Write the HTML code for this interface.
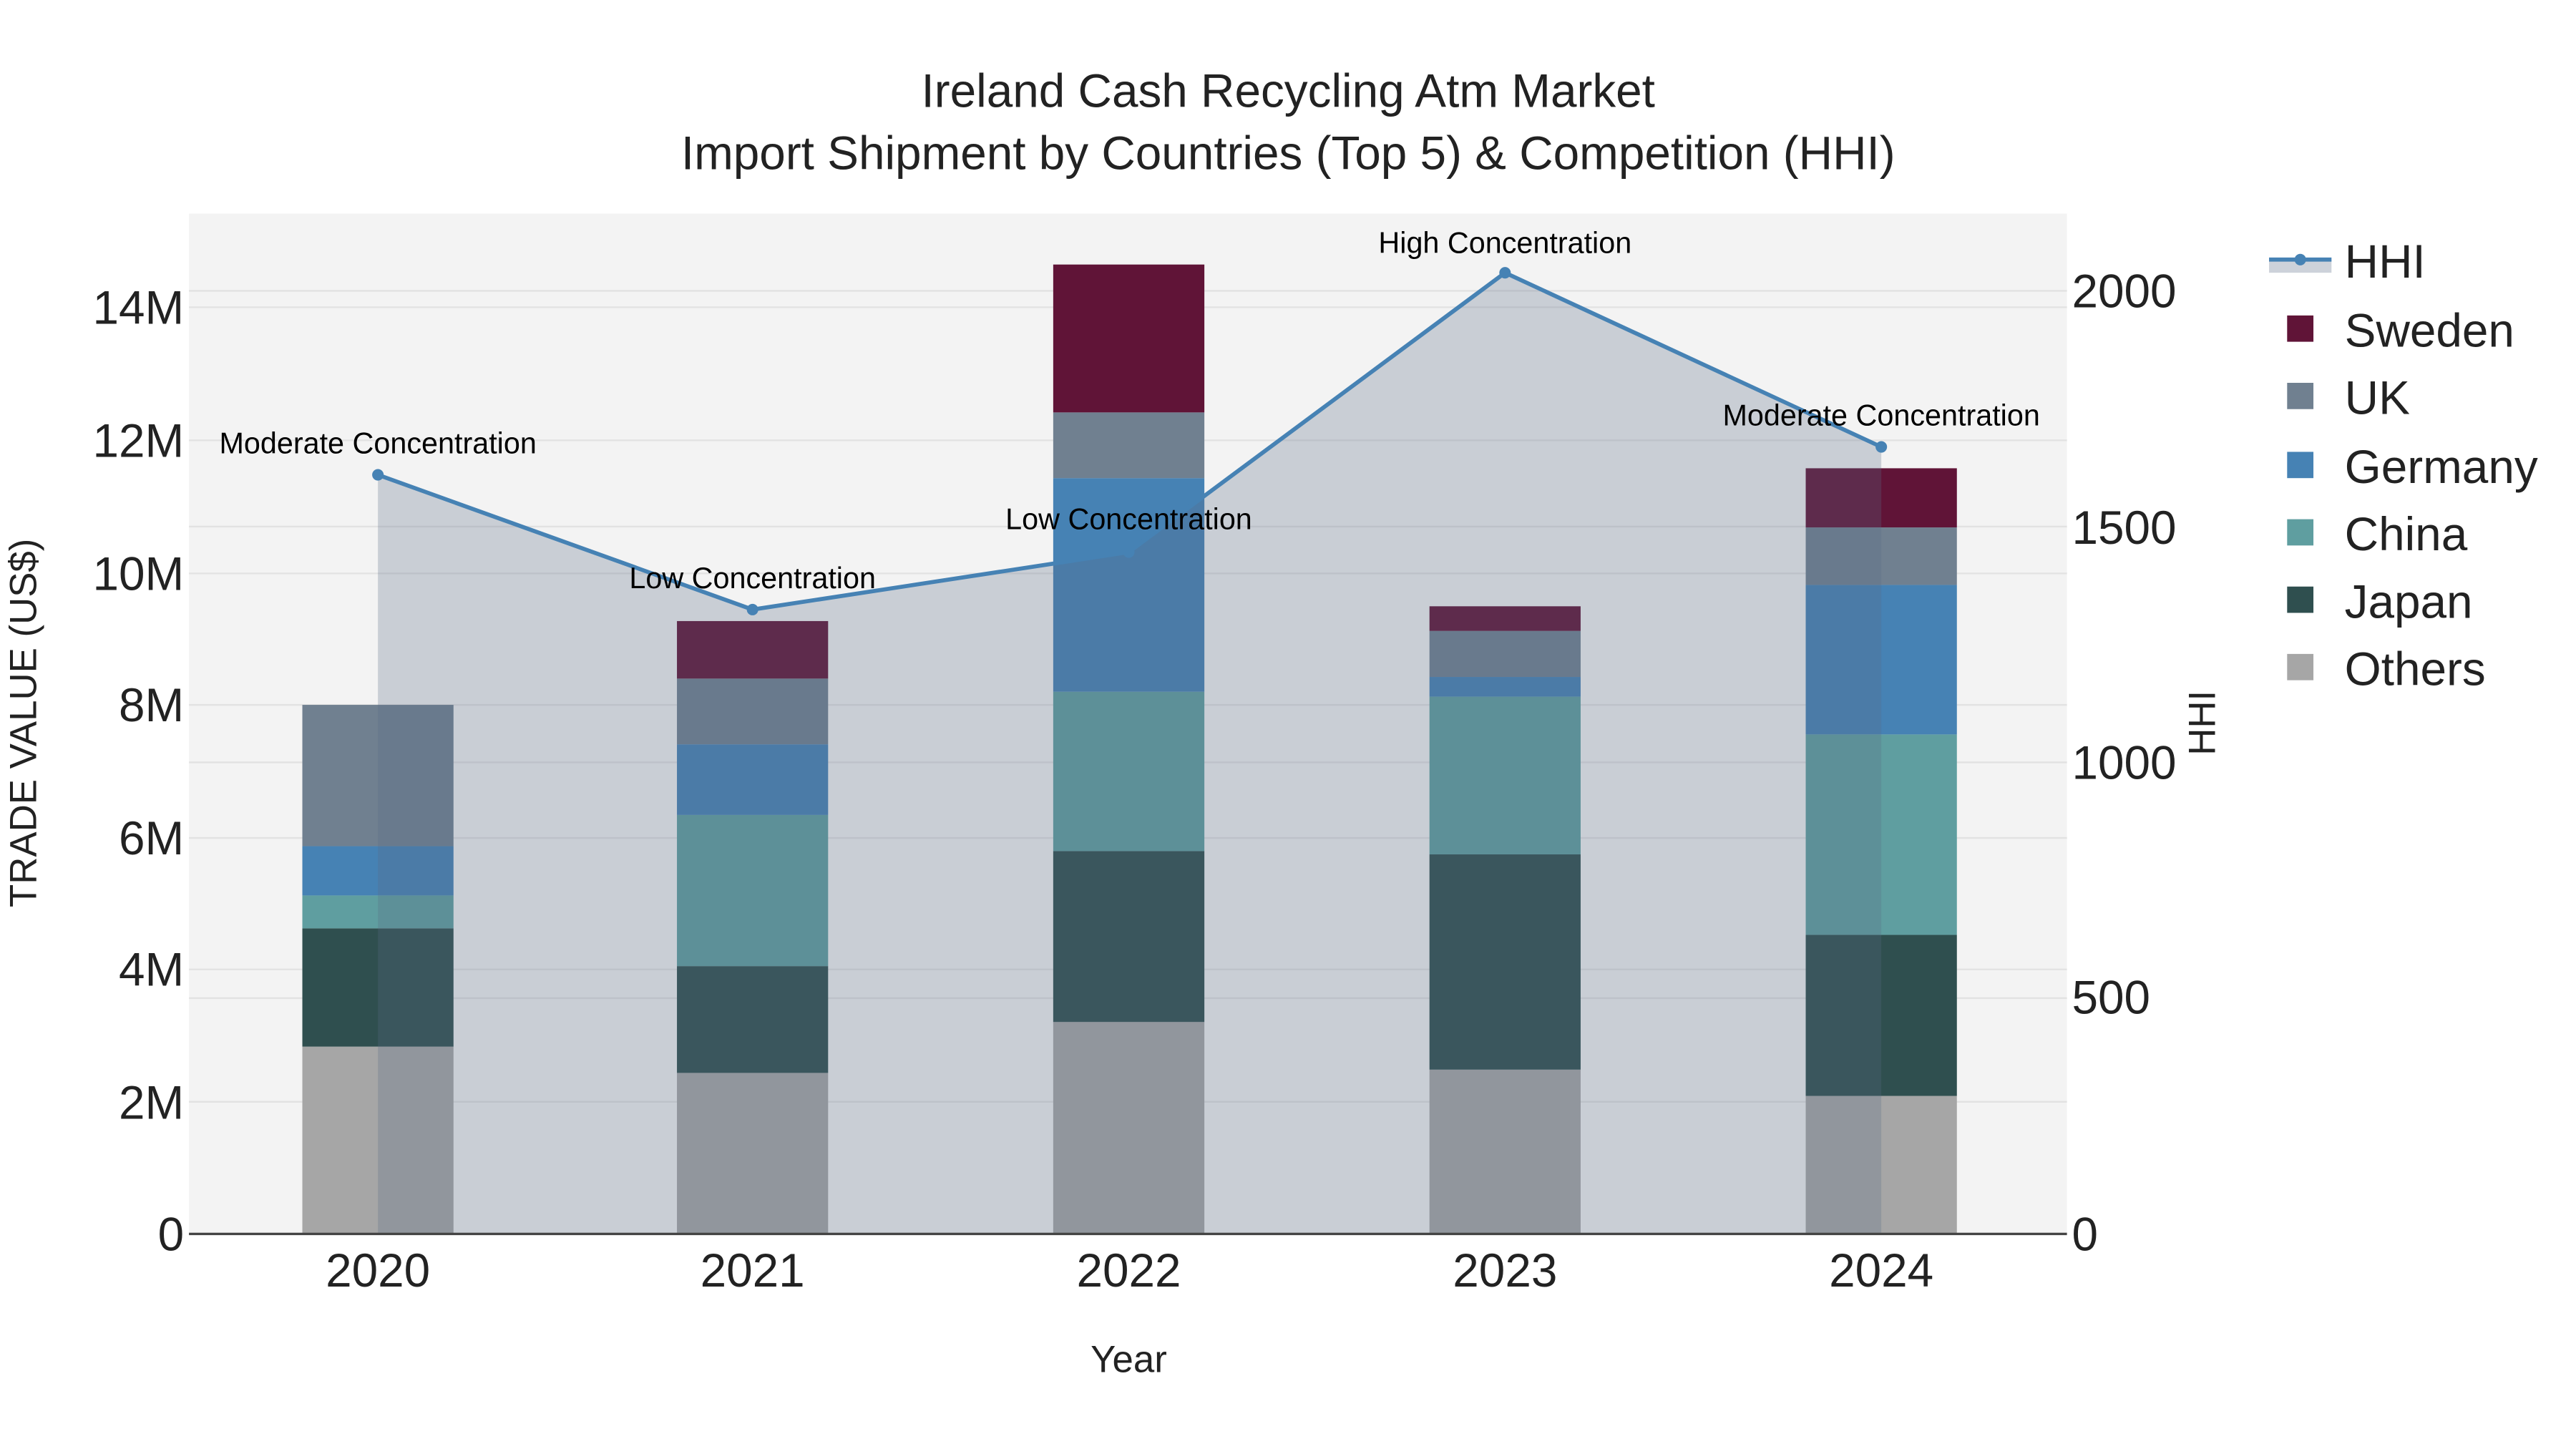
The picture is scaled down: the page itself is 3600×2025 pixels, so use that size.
<!DOCTYPE html>
<html><head><meta charset="utf-8"><style>html,body{margin:0;padding:0;background:#fff}svg{display:block}</style></head><body>
<svg width="3600" height="2025" viewBox="0 0 1567.8 881.9" xmlns="http://www.w3.org/2000/svg" font-family="Liberation Sans, sans-serif">
<rect x="0" y="0" width="1570" height="885" fill="#fff"/>
<rect x="115" y="130" width="1143" height="621" fill="#f3f3f3"/>
<g stroke="#e2e2e2" stroke-width="1">
<line x1="115" x2="1258" y1="670.6" y2="670.6"/><line x1="115" x2="1258" y1="590" y2="590"/><line x1="115" x2="1258" y1="510" y2="510"/><line x1="115" x2="1258" y1="429" y2="429"/><line x1="115" x2="1258" y1="349" y2="349"/><line x1="115" x2="1258" y1="268" y2="268"/><line x1="115" x2="1258" y1="187" y2="187"/>
<line x1="115" x2="1258" y1="607.5" y2="607.5"/><line x1="115" x2="1258" y1="464" y2="464"/><line x1="115" x2="1258" y1="320.5" y2="320.5"/><line x1="115" x2="1258" y1="177" y2="177"/>
</g>
<g>
<rect x="184" y="637" width="92" height="114" fill="#a6a6a6"/>
<rect x="184" y="565" width="92" height="72" fill="#2f4f4f"/>
<rect x="184" y="545" width="92" height="20" fill="#5f9ea0"/>
<rect x="184" y="515" width="92" height="30" fill="#4682b4"/>
<rect x="184" y="429" width="92" height="86" fill="#708090"/>
<rect x="412" y="653" width="92" height="98" fill="#a6a6a6"/>
<rect x="412" y="588" width="92" height="65" fill="#2f4f4f"/>
<rect x="412" y="496" width="92" height="92" fill="#5f9ea0"/>
<rect x="412" y="453" width="92" height="43" fill="#4682b4"/>
<rect x="412" y="413" width="92" height="40" fill="#708090"/>
<rect x="412" y="378" width="92" height="35" fill="#601437"/>
<rect x="641" y="622" width="92" height="129" fill="#a6a6a6"/>
<rect x="641" y="518" width="92" height="104" fill="#2f4f4f"/>
<rect x="641" y="421" width="92" height="97" fill="#5f9ea0"/>
<rect x="641" y="291" width="92" height="130" fill="#4682b4"/>
<rect x="641" y="251" width="92" height="40" fill="#708090"/>
<rect x="641" y="161" width="92" height="90" fill="#601437"/>
<rect x="870" y="651" width="92" height="100" fill="#a6a6a6"/>
<rect x="870" y="520" width="92" height="131" fill="#2f4f4f"/>
<rect x="870" y="424" width="92" height="96" fill="#5f9ea0"/>
<rect x="870" y="412" width="92" height="12" fill="#4682b4"/>
<rect x="870" y="384" width="92" height="28" fill="#708090"/>
<rect x="870" y="369" width="92" height="15" fill="#601437"/>
<rect x="1099" y="667" width="92" height="84" fill="#a6a6a6"/>
<rect x="1099" y="569" width="92" height="98" fill="#2f4f4f"/>
<rect x="1099" y="447" width="92" height="122" fill="#5f9ea0"/>
<rect x="1099" y="356" width="92" height="91" fill="#4682b4"/>
<rect x="1099" y="321" width="92" height="35" fill="#708090"/>
<rect x="1099" y="285" width="92" height="36" fill="#601437"/>
</g>
<polygon points="230,751 230,289 458,371 687,336 916,166 1145,272 1145,751" fill="#5a6b85" fill-opacity="0.27"/>
<polyline points="230,289 458,371 687,336 916,166 1145,272" fill="none" stroke="#4682b4" stroke-width="2.5"/>
<g fill="#4682b4"><circle cx="230" cy="289" r="3.5"/><circle cx="458" cy="371" r="3.5"/><circle cx="687" cy="336" r="3.5"/><circle cx="916" cy="166" r="3.5"/><circle cx="1145" cy="272" r="3.5"/></g>
<line x1="115" x2="1258" y1="751" y2="751" stroke="#444" stroke-width="1.5"/>
<g font-size="18" fill="#000" text-anchor="middle">
<text x="230" y="276">Moderate Concentration</text>
<text x="458" y="358">Low Concentration</text>
<text x="687" y="322">Low Concentration</text>
<text x="916" y="154">High Concentration</text>
<text x="1145" y="259">Moderate Concentration</text>
</g>
<g font-size="28.6" fill="#222" text-anchor="end">
<text x="112" y="761">0</text><text x="112" y="681">2M</text><text x="112" y="600">4M</text><text x="112" y="520">6M</text><text x="112" y="439">8M</text><text x="112" y="359">10M</text><text x="112" y="278">12M</text><text x="112" y="197">14M</text>
</g>
<g font-size="28.6" fill="#222" text-anchor="start">
<text x="1261" y="761">0</text><text x="1261" y="617">500</text><text x="1261" y="474">1000</text><text x="1261" y="331">1500</text><text x="1261" y="187">2000</text>
</g>
<g font-size="28.6" fill="#222" text-anchor="middle">
<text x="230" y="783">2020</text><text x="458" y="783">2021</text><text x="687" y="783">2022</text><text x="916" y="783">2023</text><text x="1145" y="783">2024</text>
</g>
<text x="687" y="835" font-size="23" fill="#222" text-anchor="middle">Year</text>
<text transform="translate(22,440) rotate(-90)" font-size="23" fill="#222" text-anchor="middle">TRADE VALUE (US$)</text>
<text transform="translate(1348,440) rotate(-90)" font-size="23" fill="#222" text-anchor="middle">HHI</text>
<g font-size="28.6" fill="#222" text-anchor="middle">
<text x="784" y="65">Ireland Cash Recycling Atm Market</text>
<text x="784" y="103">Import Shipment by Countries (Top 5) &amp; Competition (HHI)</text>
</g>
<rect x="1381" y="158" width="38" height="8" fill="#5a6b85" fill-opacity="0.3"/>
<line x1="1381" x2="1419" y1="158" y2="158" stroke="#4682b4" stroke-width="2.5"/>
<circle cx="1400" cy="158" r="3.5" fill="#4682b4"/>
<rect x="1392" y="192" width="16" height="16" fill="#601437"/>
<rect x="1392" y="233" width="16" height="16" fill="#708090"/>
<rect x="1392" y="275" width="16" height="16" fill="#4682b4"/>
<rect x="1392" y="316" width="16" height="16" fill="#5f9ea0"/>
<rect x="1392" y="357" width="16" height="16" fill="#2f4f4f"/>
<rect x="1392" y="398" width="16" height="16" fill="#a6a6a6"/>
<g font-size="28.6" fill="#222">
<text x="1427" y="169">HHI</text><text x="1427" y="211">Sweden</text><text x="1427" y="252">UK</text><text x="1427" y="294">Germany</text><text x="1427" y="335">China</text><text x="1427" y="376">Japan</text><text x="1427" y="417">Others</text>
</g>
</svg>
</body></html>
